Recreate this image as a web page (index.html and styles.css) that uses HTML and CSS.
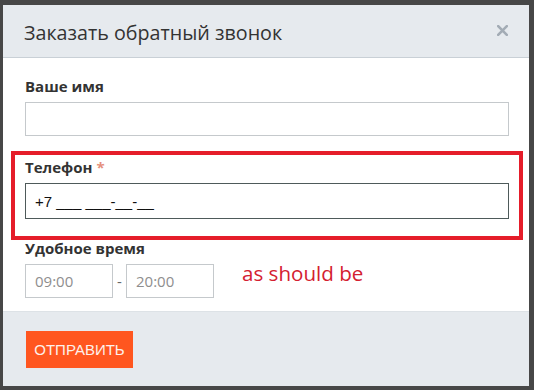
FILE: index.html
```html
<!DOCTYPE html>
<html lang="ru">
<head>
<meta charset="utf-8">
<link rel="stylesheet" href="styles.css">
</head>
<body>
<div class="dialog">
  <div class="header">
    <div class="title">Заказать обратный звонок</div>
    <svg class="close" width="11" height="11" viewBox="0 0 11 11"><path d="M1.2 1.2L9.8 9.8M9.8 1.2L1.2 9.8" stroke="#a3acb5" stroke-width="2.6" stroke-linecap="square"/></svg>
  </div>
  <div class="content">
    <div class="label">Ваше имя</div>
    <input class="field" type="text" value="">
    <div class="mark">
      <div class="label">Телефон <span class="req">*</span></div>
      <input class="field phone" type="text" value="+7 ___ ___-__-__">
    </div>
    <div class="label">Удобное время</div>
    <div class="timerow">
      <input class="field time" type="text" placeholder="09:00">
      <span class="dash">-</span>
      <input class="field time" type="text" placeholder="20:00">
      <span class="note">as should be</span>
    </div>
  </div>
  <div class="footer">
    <button class="send">ОТПРАВИТЬ</button>
  </div>
</div>
</body>
</html>
```

FILE: styles.css
```css
html, body {
  margin: 0;
  padding: 0;
  background: #474747;
  height: 390px;
  overflow: hidden;
}
.dialog {
  margin: 5px 0 0 3px;
  width: 526px;
  height: 381px;
  background: #fff;
  display: flex;
  flex-direction: column;
  font-family: "Open Sans", sans-serif;
}
.header {
  height: 52px;
  background: #e6eaee;
  border-bottom: 1px solid #c9d0d6;
  display: flex;
  align-items: center;
  justify-content: space-between;
  padding: 0 21px 0 21px;
}
.title {
  font-size: 19.7px;
  color: #333;
  margin-top: 3px;
}
.close {
  display: block;
  margin-top: -2px;
}
.content {
  flex: 1;
  padding: 17px 20px 0 22px;
}
.label {
  font-size: 15px;
  font-weight: 700;
  color: #333;
  line-height: 22px;
  margin-bottom: 5px;
}
.req {
  color: #e5907d;
}
.field {
  display: block;
  box-sizing: border-box;
  width: 100%;
  height: 34px;
  margin: 0;
  border: 1px solid #c5c9cc;
  padding: 0 9px;
  font-family: "Open Sans", sans-serif;
  font-size: 15px;
  color: #111;
  background: #fff;
  outline: none;
}
.mark {
  border: 4px solid #e51d2a;
  margin: 15px -14px -3px -14px;
  padding: 1px 10px 17px 10px;
}
.phone {
  height: 36px;
  border-color: #4e5a5a;
  font-family: "Liberation Sans", sans-serif;
  font-size: 15px;
}
.timerow {
  display: flex;
  align-items: center;
}
.time {
  width: 88px;
  flex: none;
}
.time::placeholder {
  color: #8e8e8e;
}
.dash {
  width: 13px;
  text-align: center;
  color: #666;
  font-size: 15px;
}
.note {
  margin-left: 28px;
  margin-top: -16px;
  font-size: 20.6px;
  color: #d42030;
}
.footer {
  height: 75px;
  background: #e6eaee;
  border-top: 1px solid #dde2e6;
  padding: 19px 0 0 23px;
  box-sizing: border-box;
}
.send {
  width: 107px;
  height: 37px;
  border: none;
  background: #ff561f;
  color: #fdf0ea;
  font-family: "Liberation Sans", sans-serif;
  font-size: 15px;
  padding: 0;
}
```
